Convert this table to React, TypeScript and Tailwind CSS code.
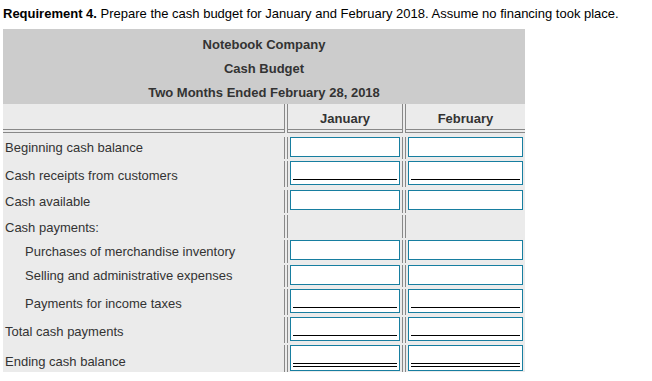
import React from "react";

type Kind = "plain" | "single" | "double" | null;

type Row = {
  label: string;
  indent?: boolean;
  kind: Kind;
  rowClass: string;
};

const rows: Row[] = [
  { label: "Beginning cash balance", kind: "plain", rowClass: "h-[26px] pt-[4px]" },
  { label: "Cash receipts from customers", kind: "single", rowClass: "h-[28px] pt-[2px]" },
  { label: "Cash available", kind: "plain", rowClass: "h-[26px] pt-[3px]" },
  { label: "Cash payments:", kind: null, rowClass: "h-[25px] pt-[2px]" },
  { label: "Purchases of merchandise inventory", indent: true, kind: "plain", rowClass: "h-[25px] pt-[2px]" },
  { label: "Selling and administrative expenses", indent: true, kind: "plain", rowClass: "h-[24px] pt-[2px]" },
  { label: "Payments for income taxes", indent: true, kind: "single", rowClass: "h-[28px] pt-[2px]" },
  { label: "Total cash payments", kind: "single", rowClass: "h-[28px] pt-[2px]" },
  { label: "Ending cash balance", kind: "double", rowClass: "h-[29px] pt-[2px]" },
];

// underline rows sit their label a little lower
const labelShift: Record<string, string> = {
  plain: "pb-[1px]",
  single: "pt-[3px]",
  double: "pt-[6px]",
  none: "pt-[1px]",
};

const Divider = () => (
  <div className="w-[4px] shrink-0 self-stretch border-x border-[#888888]" />
);

const Box = ({ kind }: { kind: Kind }) => {
  if (!kind) return null;
  if (kind === "plain") {
    return <div className="mx-[2px] h-[20px] border border-[#177ea0] bg-white" />;
  }
  if (kind === "single") {
    return (
      <div className="mx-[2px] flex h-[24px] flex-col justify-end border border-[#177ea0] bg-white px-[2px] pb-[4px]">
        <div className="h-0 border-t border-black" />
      </div>
    );
  }
  return (
    <div className="mx-[2px] flex h-[26px] flex-col justify-end border border-[#177ea0] bg-white px-[2px] pb-[3px]">
      <div className="h-[4px] border-y border-black" />
    </div>
  );
};

export default function App() {
  return (
    <div className="min-h-screen bg-white font-['Liberation_Sans',Arial,sans-serif] text-[13px] leading-[15px]">
      <p className="h-[29px] pl-[3px] pt-[6px] text-black">
        <span className="font-bold">Requirement 4.</span> Prepare the cash budget for January and February 2018. Assume no financing took place.
      </p>
      <div className="ml-[3px] w-[522px] bg-[#ebebeb] text-[#333]">
        <div className="flex h-[75px] flex-col items-center bg-[#cccccc] pt-[3px] font-bold">
          <div className="flex h-[24px] items-center">Notebook Company</div>
          <div className="flex h-[24px] items-center">Cash Budget</div>
          <div className="flex h-[24px] items-center">Two Months Ended February 28, 2018</div>
        </div>
        <div className="flex h-[25px] font-bold">
          <div className="w-[281px]" />
          <Divider />
          <div className="flex w-[114px] items-center justify-center pt-[3px]">January</div>
          <Divider />
          <div className="flex w-[119px] items-center justify-center pt-[3px]">February</div>
        </div>
        <div className="flex h-[4px]">
          <div className="w-[281px] border-y border-[#888888]" />
          <Divider />
          <div className="w-[114px] border-y border-[#888888]" />
          <Divider />
          <div className="w-[119px] border-y border-[#888888]" />
        </div>
        {rows.map((r) => (
          <div key={r.label} className={`flex ${r.rowClass}`}>
            <div
              className={`flex w-[281px] items-center ${r.indent ? "pl-[22px]" : "pl-[2px]"} ${labelShift[r.kind ?? "none"]}`}
            >
              {r.label}
            </div>
            <Divider />
            <div className="w-[114px]">
              <Box kind={r.kind} />
            </div>
            <Divider />
            <div className="w-[119px]">
              <Box kind={r.kind} />
            </div>
          </div>
        ))}
      </div>
    </div>
  );
}
